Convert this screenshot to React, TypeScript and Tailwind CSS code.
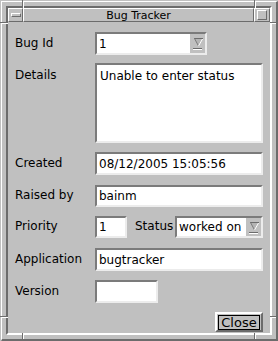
import type { ReactNode } from "react";

const sunken =
  "border-2 border-t-[#7b7b7b] border-l-[#7b7b7b] border-b-[#ececec] border-r-[#ececec]";
const raised1 =
  "border border-t-white border-l-white border-b-[#6c6c6c] border-r-[#6c6c6c]";

function ArrowIcon() {
  return (
    <svg width="15" height="19" viewBox="0 0 15 19" className="block">
      <polygon points="4,4 13,4 8.5,12" fill="#b4b4b4" />
      <line x1="4" y1="4.5" x2="13" y2="4.5" stroke="#6c6c6c" strokeWidth="1" />
      <line x1="4.5" y1="4.5" x2="8.5" y2="12" stroke="#7b7b7b" strokeWidth="1" />
      <line x1="12.5" y1="5" x2="8.5" y2="12" stroke="#ffffff" strokeWidth="1" />
      <rect x="3" y="14" width="9" height="1" fill="#6c6c6c" />
      <rect x="3" y="15" width="9" height="1" fill="#ffffff" />
    </svg>
  );
}

function Field({ value, className }: { value?: string; className: string }) {
  return (
    <div className={`${sunken} bg-white flex items-center pl-[2px] ${className}`}>
      {value}
    </div>
  );
}

function Combo({ value, className }: { value: string; className: string }) {
  return (
    <div className={`${sunken} bg-[#c0c0c0] flex ${className}`}>
      <div className="flex-1 bg-white flex items-center pl-[2px] overflow-hidden whitespace-nowrap">
        {value}
      </div>
      <div className="w-[15px] shrink-0">
        <ArrowIcon />
      </div>
    </div>
  );
}

function Row({ label, top, className, children }: { label: string; top?: boolean; className: string; children: ReactNode }) {
  return (
    <div className={`flex ${top ? "items-start" : "items-center"} ${className}`}>
      <div className={`w-[80px] shrink-0 ${top ? "pt-[5px]" : "pb-[2px]"}`}>{label}</div>
      {children}
    </div>
  );
}

/* frame resize-handle notches */
function Notch({ className }: { className: string }) {
  return <div className={`absolute ${className}`} />;
}

export default function App() {
  return (
    <div className="relative w-[278px] h-[341px] bg-[#c0c0c0] pl-px pt-px text-[12px] leading-[14px] text-black [font-family:'DejaVu_Sans',sans-serif]">
      <div className="h-full w-full border-t border-l border-b-2 border-r-2 border-t-white border-l-white border-b-[#6c6c6c] border-r-[#6c6c6c] p-1">
        <div className="flex flex-col h-full border-2 border-t-[#6c6c6c] border-l-[#6c6c6c] border-b-white border-r-white">
          {/* title bar */}
          <div className="flex h-[14px] shrink-0">
            <div className={`w-[15px] ${raised1} flex items-center justify-center`}>
              <div className={`w-[10px] h-[4px] ${raised1}`} />
            </div>
            <div className={`flex-1 ${raised1} flex items-center justify-center text-[11px] leading-none`}>
              Bug Tracker
            </div>
            <div className={`w-[16px] ${raised1} flex items-center justify-center`}>
              <div className={`w-[10px] h-[10px] ${raised1}`} />
            </div>
          </div>

          {/* client */}
          <div className="flex-1 flex flex-col pl-[7px] pr-[7px] pt-[10px]">
            <Row label="Bug Id" className="">
              <Combo value="1" className="w-[112px] h-[23px]" />
            </Row>
            <Row label="Details" top className="mt-[8px]">
              <div className={`${sunken} bg-white w-[168px] h-[80px] pl-[3px] pt-[4px]`}>
                Unable to enter status
              </div>
            </Row>
            <Row label="Created" className="mt-[9px]">
              <Field value="08/12/2005 15:05:56" className="w-[168px] h-[23px]" />
            </Row>
            <Row label="Raised by" className="mt-[10px]">
              <Field value="bainm" className="w-[168px] h-[22px]" />
            </Row>
            <Row label="Priority" className="mt-[9px]">
              <Field value="1" className="w-[32px] h-[22px]" />
              <div className="ml-[8px] w-[38px] pb-[2px]">Status</div>
              <Combo value="worked on" className="ml-[2px] w-[88px] h-[22px]" />
            </Row>
            <Row label="Application" className="mt-[10px]">
              <Field value="bugtracker" className="w-[168px] h-[23px]" />
            </Row>
            <Row label="Version" className="mt-[9px]">
              <Field className="w-[63px] h-[23px]" />
            </Row>
            <div className="flex justify-end mt-[9px]">
              <button className="w-[48px] h-[20px] border-2 border-t-white border-l-white border-b-[#6c6c6c] border-r-[#6c6c6c] flex items-center justify-center px-[2px]">
                <span className="border border-black px-[2px] text-[13px] leading-[13px]">Close</span>
              </button>
            </div>
          </div>
        </div>
      </div>

      <Notch className="left-[22px] top-0 w-px h-[8px] bg-[#6c6c6c]" />
      <Notch className="left-[23px] top-[1px] w-px h-[7px] bg-white" />
      <Notch className="left-[254px] top-0 w-px h-[8px] bg-[#6c6c6c]" />
      <Notch className="left-[255px] top-[1px] w-px h-[7px] bg-white" />
      <Notch className="left-[22px] bottom-0 w-px h-[8px] bg-[#6c6c6c]" />
      <Notch className="left-[23px] bottom-[2px] w-px h-[6px] bg-white" />
      <Notch className="left-[254px] bottom-0 w-px h-[8px] bg-[#6c6c6c]" />
      <Notch className="left-[255px] bottom-[2px] w-px h-[6px] bg-white" />
      <Notch className="top-[22px] left-0 h-px w-[8px] bg-[#6c6c6c]" />
      <Notch className="top-[23px] left-[1px] h-px w-[7px] bg-white" />
      <Notch className="top-[316px] left-0 h-px w-[8px] bg-[#6c6c6c]" />
      <Notch className="top-[317px] left-[1px] h-px w-[7px] bg-white" />
      <Notch className="top-[22px] right-0 h-px w-[8px] bg-[#6c6c6c]" />
      <Notch className="top-[23px] right-[2px] h-px w-[6px] bg-white" />
      <Notch className="top-[316px] right-0 h-px w-[8px] bg-[#6c6c6c]" />
      <Notch className="top-[317px] right-[2px] h-px w-[6px] bg-white" />
    </div>
  );
}
